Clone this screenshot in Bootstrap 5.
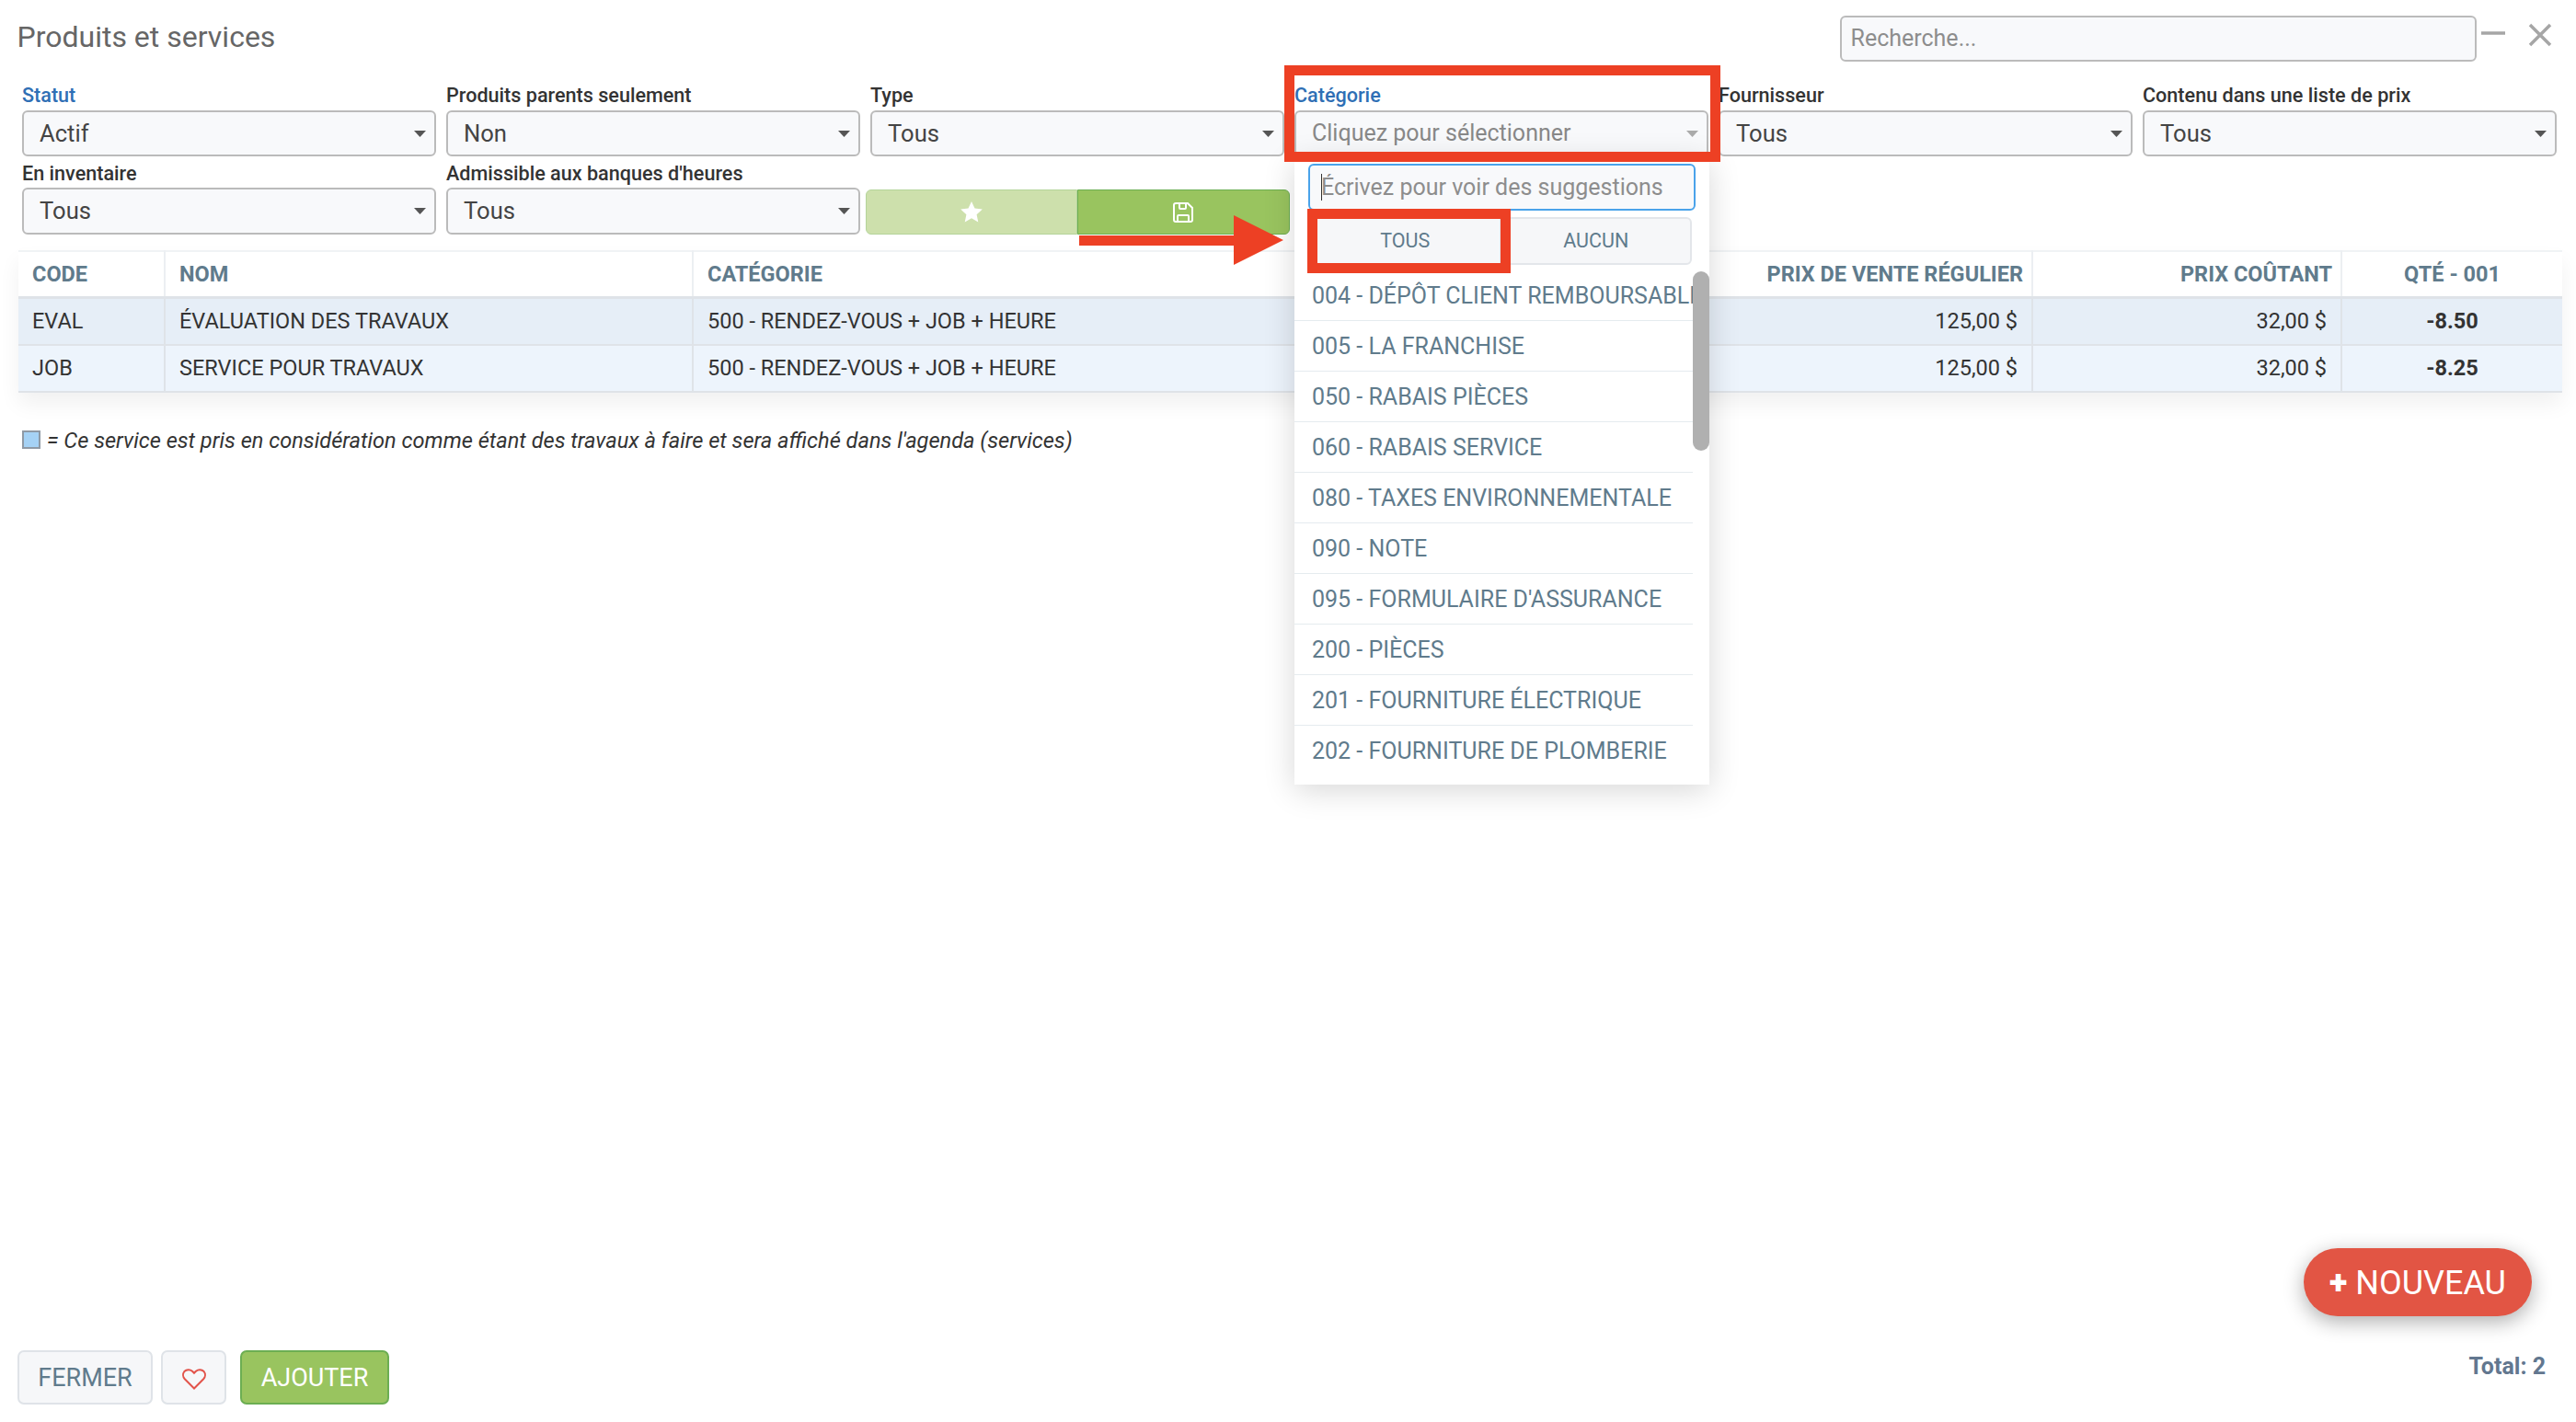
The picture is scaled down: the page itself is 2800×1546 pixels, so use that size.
<!DOCTYPE html>
<html lang="fr">
<head>
  <meta charset="UTF-8">
  <title>Produits et services</title>
  <link href="https://cdn.jsdelivr.net/npm/bootstrap@5.3.0/dist/css/bootstrap.min.css" rel="stylesheet">
  <style>
    body { background: #fff; font-family: Roboto, "Liberation Sans", sans-serif; overflow: hidden; }
    .page-wrap { position: relative; height: 1546px; padding: 17px 15.5px 19px 18.5px; }
    .page-title { font-size: 32px; font-weight: 400; color: #666; margin: -3px 0 0 0; }
    .search-box { width: 692px; height: 50px; font-size: 25px; color: #888; background: #f8f9fb; border: 2px solid #bbb; border-radius: 6px; padding: 0 10px 2px; }
    .search-box::placeholder { color: #8d8d8d; }
    .win-min { margin: -11px 0 0 5px; }
    .win-close { margin: -9px 11px 0 25px; }

    .filter-row { width: 2766px; margin-top: 25px; }
    .filter-col { padding: 0 5.5px; position: relative; }
    .filter-col.second-line { margin-top: 7px; }
    .filter-label { display: block; font-size: 21.6px; line-height: 24px; font-weight: 500; color: #333; margin-bottom: 4px; white-space: nowrap; }
    .filter-label.is-active { color: #2f6fb5; }
    .second-line .filter-label { margin-bottom: 3px; }
    .filter-select { height: 50px; font-size: 25.6px; color: #444; padding: 0 40px 0 17px; background-color: #f8f9fb; border: 2px solid #bbb; border-radius: 6px;
      background-image: url("data:image/svg+xml,%3Csvg xmlns='http://www.w3.org/2000/svg' viewBox='0 0 13 7'%3E%3Cpath d='M0 0h13L6.5 7z' fill='%23555'/%3E%3C/svg%3E");
      background-size: 13px 7px; background-position: right 9px center; }
    .second-line .filter-select { height: 51px; }
    .filter-select.is-empty { color: #888; font-size: 25px;
      background-image: url("data:image/svg+xml,%3Csvg xmlns='http://www.w3.org/2000/svg' viewBox='0 0 13 7'%3E%3Cpath d='M0 0h13L6.5 7z' fill='%23aaa'/%3E%3C/svg%3E"); }
    .fav-group { height: 49px; }
    .btn-pale { flex: 1; background: #cde0ac; border: 1px solid #b4d49a; border-radius: 6px 0 0 6px; display: flex; align-items: center; justify-content: center; padding: 0; }
    .btn-leaf { flex: 1; background: #99c45f; border: 1px solid #6cae52; border-radius: 0 6px 6px 0; display: flex; align-items: center; justify-content: center; padding: 0; }

    .data-table { table-layout: fixed; width: 2765px; margin: 17px 0 0 1.5px; font-size: 23.5px; box-shadow: 0 12px 22px rgba(0,0,0,.06); border-top: 2px solid #f0f3f5; }
    .data-table th { height: 50px; padding: 1px 15px 0; font-weight: 700; color: #607b8c; background: #fff; border-bottom: 3px solid #dfe3e8; border-right: 2px solid #eceff2; vertical-align: middle; }
    .data-table td { padding: 1px 15px 0; color: #333; vertical-align: middle; border-bottom: 2px solid #dfe3e8; border-right: 2px solid #dfe3e8; }
    .data-table th:last-child, .data-table td:last-child { border-right: 0; }
    .data-table th.head-right { text-align: right; padding-right: 9px; }
    .data-table td.text-end { padding-right: 15px; }
    .data-table tr.line-a td { background: #e6eef7; height: 52px; }
    .data-table tr.line-b td { background: #edf4fc; height: 51px; }
    .data-table td.no-line { border-right: 0; }
    .data-table td.qty { font-weight: 700; text-align: center; }

    .legend-line { margin: 40px 0 0 5.5px; font-size: 23.6px; font-style: italic; color: #333; line-height: 24px; gap: 7px; }
    .legend-swatch { width: 20px; height: 20px; background: #a5d2f5; border: 2px solid #8f9aa5; flex: none; margin-top: -2px; }

    .cat-panel { position: absolute; left: 5.5px; top: 79px; width: 451px; height: 682px; background: #fff; box-shadow: 0 6px 32px rgba(0,0,0,.16); overflow: hidden; z-index: 5; }
    .cat-input-wrap { position: relative; margin: 7px 15px 0 15px; }
    .cat-input { height: 51px; width: 100%; font-size: 25px; background: #f8f9fb; border: 2px solid #4aa3ea; border-radius: 6px; padding: 0 12px; }
    .cat-input::placeholder { color: #8d8d8d; }
    .cat-cursor { position: absolute; left: 14px; top: 11px; width: 1px; height: 29px; background: #333; }
    .cat-group { margin: 7px 18px 6px 16px; height: 52px; }
    .btn-group .cat-btn { flex: 0 0 50%; font-size: 21.5px; color: #607b8c; background: #f6f7f9; border: 2px solid #e3e6ea; padding: 0; }
    .cat-list { width: 433px; }
    .cat-item { height: 55px; padding: 0 0 0 19px; font-size: 25px; line-height: 55px; color: #607b8c; white-space: nowrap; overflow: hidden; border: 0; border-bottom: 2px solid #e5ebef; border-radius: 0; }
    .cat-scroll { position: absolute; left: 433px; top: 124px; width: 18px; height: 195px; background: #b0b0b0; border-radius: 9px; }

    .mark-box { position: absolute; border: 11px solid #ed4024; z-index: 8; }
    .mark-cat { left: 1396px; top: 71px; width: 474px; height: 105px; }
    .mark-all { left: 1421px; top: 227px; width: 221px; height: 70px; }
    .mark-arrow { position: absolute; left: 1173px; top: 234px; z-index: 8; }

    .foot-bar { position: absolute; left: 19px; right: 33px; bottom: 19px; }
    .foot-btn { height: 59px; font-size: 27px; color: #607b8c; background: #f6f7f9; border: 2px solid #dfe3e8; border-radius: 7px; padding: 1px 0 0 0; }
    .foot-close { width: 147px; }
    .foot-fav { width: 71px; margin-left: 9px; }
    .foot-add { width: 162px; margin-left: 15px; color: #fff; background: #99c45f; border-color: #6cae52; }
    .total-txt { font-size: 25px; font-weight: 700; color: #62778f; margin-bottom: 23px; }
    .btn-nouveau { position: absolute; left: 2504px; top: 1357px; width: 248px; height: 74px; font-size: 36px; line-height: 1; color: #fff; background: #e25544; border: 0; border-radius: 37px; padding: 2px 0 0 0; box-shadow: 0 6px 22px rgba(0,0,0,.32); }
    .btn-nouveau b { font-weight: 900; }
  </style>
</head>
<body>
  <div class="page-wrap">
    <div class="d-flex align-items-center">
      <h1 class="page-title me-auto">Produits et services</h1>
      <input type="text" class="search-box form-control" placeholder="Recherche...">
      <svg class="win-min" width="26" height="8" viewBox="0 0 26 8"><path d="M0 3h26" stroke="#a6a6a6" stroke-width="3.5" fill="none"/></svg>
      <svg class="win-close" width="26" height="26" viewBox="0 0 26 26"><path d="M2 2l22 22M24 2L2 24" stroke="#a6a6a6" stroke-width="3.5" fill="none"/></svg>
    </div>

    <div class="row g-0 filter-row">
      <div class="col-2 filter-col">
        <label class="filter-label is-active">Statut</label>
        <select class="form-select filter-select"><option>Actif</option></select>
      </div>
      <div class="col-2 filter-col">
        <label class="filter-label">Produits parents seulement</label>
        <select class="form-select filter-select"><option>Non</option></select>
      </div>
      <div class="col-2 filter-col">
        <label class="filter-label">Type</label>
        <select class="form-select filter-select"><option>Tous</option></select>
      </div>
      <div class="col-2 filter-col">
        <label class="filter-label is-active">Catégorie</label>
        <select class="form-select filter-select is-empty"><option>Cliquez pour sélectionner</option></select>
        <div class="cat-panel d-flex flex-column">
          <div class="cat-input-wrap">
            <input type="text" class="form-control cat-input" placeholder="Écrivez pour voir des suggestions">
            <span class="cat-cursor"></span>
          </div>
          <div class="btn-group cat-group">
            <button type="button" class="btn cat-btn">TOUS</button>
            <button type="button" class="btn cat-btn">AUCUN</button>
          </div>
          <div class="list-group list-group-flush cat-list">
            <div class="list-group-item cat-item">004 - DÉPÔT CLIENT REMBOURSABLE</div>
            <div class="list-group-item cat-item">005 - LA FRANCHISE</div>
            <div class="list-group-item cat-item">050 - RABAIS PIÈCES</div>
            <div class="list-group-item cat-item">060 - RABAIS SERVICE</div>
            <div class="list-group-item cat-item">080 - TAXES ENVIRONNEMENTALE</div>
            <div class="list-group-item cat-item">090 - NOTE</div>
            <div class="list-group-item cat-item">095 - FORMULAIRE D'ASSURANCE</div>
            <div class="list-group-item cat-item">200 - PIÈCES</div>
            <div class="list-group-item cat-item">201 - FOURNITURE ÉLECTRIQUE</div>
            <div class="list-group-item cat-item">202 - FOURNITURE DE PLOMBERIE</div>
          </div>
          <div class="cat-scroll"></div>
        </div>
      </div>
      <div class="col-2 filter-col">
        <label class="filter-label">Fournisseur</label>
        <select class="form-select filter-select"><option>Tous</option></select>
      </div>
      <div class="col-2 filter-col">
        <label class="filter-label">Contenu dans une liste de prix</label>
        <select class="form-select filter-select"><option>Tous</option></select>
      </div>

      <div class="col-2 filter-col second-line">
        <label class="filter-label">En inventaire</label>
        <select class="form-select filter-select"><option>Tous</option></select>
      </div>
      <div class="col-2 filter-col second-line">
        <label class="filter-label">Admissible aux banques d'heures</label>
        <select class="form-select filter-select"><option>Tous</option></select>
      </div>
      <div class="col-2 px-0 align-self-end">
        <div class="d-flex fav-group">
          <button type="button" class="btn btn-pale">
            <svg width="24" height="23" viewBox="0 0 24 23"><path d="M12 0l3.5 7.6 8.3 1-6.2 5.6 1.7 8.2L12 18.3l-7.3 4.1 1.7-8.2L.2 8.6l8.3-1z" fill="#fff"/></svg>
          </button>
          <button type="button" class="btn btn-leaf">
            <svg width="22" height="22" viewBox="0 0 22 22" fill="none" stroke="#fff" stroke-width="2"><path d="M1 3a2 2 0 0 1 2-2h13l5 5v13a2 2 0 0 1-2 2H3a2 2 0 0 1-2-2z"/><path d="M7 1v5a1 1 0 0 0 1 1h5a1 1 0 0 0 1-1V1"/><path d="M5 21v-6a1 1 0 0 1 1-1h10a1 1 0 0 1 1 1v6"/></svg>
          </button>
        </div>
      </div>
    </div>

    <table class="data-table">
      <colgroup>
        <col style="width:159px"><col style="width:574px"><col style="width:847px"><col style="width:609px"><col style="width:336px"><col style="width:240px">
      </colgroup>
      <thead>
        <tr>
          <th>CODE</th>
          <th>NOM</th>
          <th class="border-end-0">CATÉGORIE</th>
          <th class="head-right">PRIX DE VENTE RÉGULIER</th>
          <th class="head-right">PRIX COÛTANT</th>
          <th class="text-center">QTÉ - 001</th>
        </tr>
      </thead>
      <tbody>
        <tr class="line-a">
          <td>EVAL</td>
          <td>ÉVALUATION DES TRAVAUX</td>
          <td class="no-line">500 - RENDEZ-VOUS + JOB + HEURE</td>
          <td class="text-end">125,00 $</td>
          <td class="text-end">32,00 $</td>
          <td class="qty">-8.50</td>
        </tr>
        <tr class="line-b">
          <td>JOB</td>
          <td>SERVICE POUR TRAVAUX</td>
          <td class="no-line">500 - RENDEZ-VOUS + JOB + HEURE</td>
          <td class="text-end">125,00 $</td>
          <td class="text-end">32,00 $</td>
          <td class="qty">-8.25</td>
        </tr>
      </tbody>
    </table>

    <div class="legend-line d-flex align-items-center">
      <span class="legend-swatch"></span>
      <span>= Ce service est pris en considération comme étant des travaux à faire et sera affiché dans l'agenda (services)</span>
    </div>

    <div class="mark-box mark-cat"></div>
    <div class="mark-box mark-all"></div>
    <svg class="mark-arrow" width="222" height="54" viewBox="0 0 222 54"><path d="M0 22h168V0l54 27-54 27V33H0z" fill="#ed4024"/></svg>

    <button type="button" class="btn btn-nouveau"><b>+</b> NOUVEAU</button>

    <div class="foot-bar d-flex align-items-end justify-content-between">
      <div class="d-flex">
        <button type="button" class="btn foot-btn foot-close">FERMER</button>
        <button type="button" class="btn foot-btn foot-fav">
          <svg width="26" height="23" viewBox="0 0 26 23" fill="none" stroke="#e2534a" stroke-width="2"><path d="M13 21.5L2.8 11.3A6.4 6.4 0 0 1 2.4 3 6.3 6.3 0 0 1 11 2.7L13 4.8l2-2.1A6.3 6.3 0 0 1 23.6 3a6.4 6.4 0 0 1-.4 8.3z"/></svg>
        </button>
        <button type="button" class="btn foot-btn foot-add">AJOUTER</button>
      </div>
      <div class="total-txt">Total: 2</div>
    </div>
  </div>
</body>
</html>
